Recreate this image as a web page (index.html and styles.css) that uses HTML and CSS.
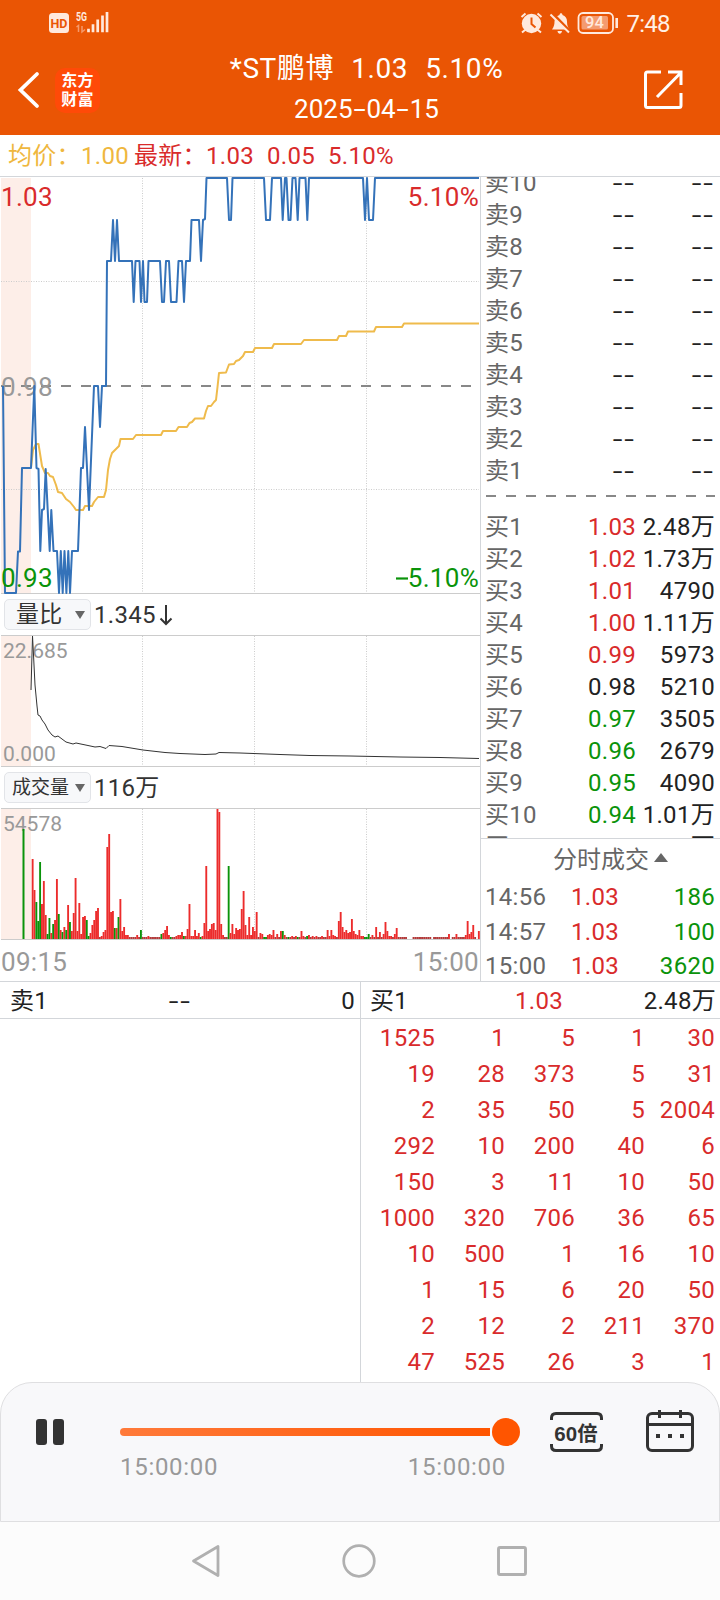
FILE: index.html
```html
<!DOCTYPE html>
<html lang="zh-CN">
<head>
	<title>*ST鹏博 2025-04-15</title>
	<meta charset="utf-8">
	<meta name="viewport" content="width=device-width, initial-scale=1">
	<link rel="stylesheet" href="styles.css">
</head>
<body>
	<header class="header">
		<div class="statusBar">
			<svg class="statusLeft" width="64" height="24" viewBox="48 10 64 24">
				<rect x="49" y="13" width="20" height="20" rx="3.5" fill="#ffe9dd"/>
				<text x="59" y="27.6" font-size="12.5" font-weight="700" text-anchor="middle" fill="#ea5504">HD</text>
				<text x="76" y="20.5" font-size="12" font-weight="700" textLength="11" lengthAdjust="spacingAndGlyphs" fill="#ffe9dd">5G</text>
				<path d="M76.5 27l2-1.5V32M82 26v6l3-2.5" fill="none" stroke="#f59a6c" stroke-width="1.5"/>
				<path d="M88.5 32.3v-3.6M93 32.3v-8M97.7 32.3V19.5M102.5 32.3V15.5M107 32.3V12" stroke="#ffe9dd" stroke-width="2.7"/>
			</svg>
			<svg class="statusRight" width="158" height="28" viewBox="518 9 158 28">
				<g fill="none" stroke="#ffe9dd">
					<circle cx="531.5" cy="23.5" r="9.7" fill="#ffe9dd" stroke="none"/>
					<path d="M521.5 17l4-3.5M541.5 17l-4-3.5M525 30l-3 2.5M538 30l3 2.5" stroke-width="2"/>
					<path d="M531.5 17.5v6.5l4 3.5" stroke="#ea5504" stroke-width="2"/>
					<path d="M552 29.5c2-3 2.5-5 2.5-8 0-3 2-5.5 5-6.5 0-2.5 3-2.5 3 0 3 1 4.5 3.5 4.5 6.5 0 4 1 6 2.5 8z" fill="#ffe9dd" stroke="none"/>
					<path d="M557.5 31h4.5c-.5 3.5-4 3.5-4.5 0z" fill="#ffe9dd" stroke="none"/>
					<path d="M552 13l19 19.5" stroke="#ea5504" stroke-width="3"/>
					<path d="M550.5 14.500l18.500 18" stroke-width="2"/>
					<rect x="578.5" y="13" width="34.5" height="20" rx="4.5" stroke-width="1.8"/>
					<path d="M616.7 18v10" stroke-width="2.6"/>
				</g>
				<rect x="581.5" y="16" width="26.5" height="13.5" rx="1.5" fill="#f49b70"/>
				<text x="594.5" y="28.4" font-size="16.5" font-weight="500" text-anchor="middle" fill="#ffe9dd">94</text>
				<text x="626.5" y="32" font-size="24" textLength="44" fill="#fff0e6">7:48</text>
			</svg>
		</div>
		<div class="titleBar">
			<svg class="back" width="24" height="40" viewBox="16 70 24 40">
				<path d="M37 74L20.5 90 37 106" fill="none" stroke="#fff" stroke-width="3.8" stroke-linecap="round"/>
			</svg>
			<div class="logo">东方<br>财富</div>
			<div class="title">
				<div class="name"><span>*ST鹏博</span><span>1.03</span><span>5.10%</span></div>
				<div class="date">2025<i class="dash">-</i>04<i class="dash">-</i>15</div>
			</div>
			<svg class="share" width="42" height="42" viewBox="643 69 42 42">
				<path d="M661 72h-13.5q-2 0-2 2v31.5q0 2 2 2h31.5q2 0 2-2V93M668 72h13v13M681 72.5L657 97" fill="none" stroke="#fff" stroke-width="3"/>
			</svg>
		</div>
	</header>

	<div class="quote">
		<span class="avg avgLabel">均价：</span>
		<span class="avg avgValue">1.00</span>
		<span class="up lastLabel">最新：</span>
		<span class="up">1.03</span>
		<span class="up">0.05</span>
		<span class="up">5.10%</span>
	</div>

	<main class="market">
		<section class="charts">
			<svg class="chart" width="480" height="417" viewBox="0 177 480 417">
				<rect class="preopen" x="1" y="178" width="30" height="416"/>
				<path class="grid" d="M142.5 178v415M254.5 178v415M366.5 178v415M1 281.5h478M1 489.5h478"/>
				<path class="frame" d="M1 593.5h479"/>
				<path d="M1 386h478" stroke="#888" stroke-width="2" stroke-dasharray="10 10"/>
				<text x="1" y="396" font-size="26" fill="#999">0.98</text>
				<polyline class="avgLine" points="31,468 33,450 36,444 38.5,444 42,466 45,473 48,473 50,476 53,477 56,485 58,492 62,493 66,499 70,502 74,507 76,510 83,510 85,506 92,506 94,502 98,497 104,497 106,490 108,470 110,459 112,453 116,449 119,446 120.5,439 133,439 136,435 161,435 163,431 176,431 178.5,427 187,427 189.5,423 192,422 195,418.5 204,418.5 206,411 208,406 211,406 214,402 216,400 217.5,387 219,373 226,372.5 229,364.5 234,364 236,361 239,360 243,356 245,352 253,352 255,348 272,348 274,344 301,344 304,340 337,340 339,336 346,336 348,331.5 374,331.5 376,327 402,327 404,323.5 479,323.5"/>
				<polyline class="priceLine" points="3,386 5,593 16,593 18,551.5 20,551.5 22,468 31,468 34.3,386 36.5,468 38.5,469 40.3,551 42,510 44,509 45.7,469 49.7,551 51.3,510 53.5,551 57,551 59,593 60.8,551 62.7,593 64.5,551 66.4,593 68.3,551 70,593 72,551 78,551 81,468 83,468 85,427 89,510 94,386 98,386 100,427 102,386 106,386 107,261 111,261 113,220 115,261 117,220 119,261 132,261 133.7,302 135.5,261 139.5,261 141,302 143,261 144.5,302 147,302 148.5,261 160,261 162,302 164,302 166,261 169,261 171,302 176.5,302 178.5,261 182,261 184,302 186,261 190,261 191.5,220 199,220 201,261 203,220 205,219 206.5,178 227,178 229,220 231,220 232.5,178 264,178 266,220 270,220 272,178 281,178 282.7,220 285,178 286.5,178 288.5,220 290.5,220 292.5,178 295.5,178 297.7,220 299.5,178 305.5,178 307.3,220 309,178 363,178 365,220 367,178 369,220 373,220 375,178 479,178"/>
				<text x="1" y="206" font-size="26" fill="#d92b2b">1.03</text>
				<text x="479" y="206" font-size="26" text-anchor="end" fill="#d92b2b">5.10%</text>
				<text x="1" y="587" font-size="26" fill="#0a930a">0.93</text>
				<path d="M396 578.5h12" stroke="#0a930a" stroke-width="2.2"/>
				<text x="479" y="587" font-size="26" text-anchor="end" fill="#0a930a">5.10%</text>
			</svg>

			<div class="indicator">
				<div class="picker">量比<i class="caret"></i></div>
				<span>1.345</span>
				<svg width="14" height="22" viewBox="0 0 14 22"><path d="M7 1v19M1.5 14.5L7 20l5.5-5.5" fill="none" stroke="#333" stroke-width="2"/></svg>
			</div>

			<svg class="chart" width="480" height="132" viewBox="0 635 480 132">
				<rect class="preopen" x="1" y="636" width="30" height="130"/>
				<path class="grid" d="M142.5 636v130M254.5 636v130M366.5 636v130"/>
				<path class="frame" d="M1 635.5h479M1 766.5h479"/>
				<text class="scale" x="3" y="658">22.685</text>
				<text class="scale" x="3" y="761">0.000</text>
				<polyline class="ratioLine" points="31,690 32.5,636 33.5,655 35,685 37,706 38,715 40,716 42,720 45,724 48,730 52,735 55,737 58,736 62,739 66,742 73,744 76,743 88,745.5 95,747 100,746.5 106,748.5 109,745.5 122,746.5 143,750 165,752.5 180,753.5 205,754.5 216,754 219,752.5 240,753 280,754.5 310,755.5 350,756 400,757 440,757.5 479,758.5"/>
			</svg>

			<div class="indicator">
				<div class="picker wide">成交量<i class="caret"></i></div>
				<span>116万</span>
			</div>

			<svg class="chart" width="480" height="132" viewBox="0 808 480 132">
				<rect class="preopen" x="1" y="809" width="30" height="130"/>
				<path class="grid" d="M142.5 809v130M254.5 809v130M366.5 809v130"/>
				<path class="frame" d="M1 808.5h479M1 939.5h479"/>
				<text class="scale" x="3" y="831">54578</text>
				<g id="volume"></g>
			</svg>

			<div class="timeAxis"><span>09:15</span><span>15:00</span></div>
		</section>

		<section class="side">
			<div class="book">
				<div id="asks"></div>
				<div class="spread"><svg width="229" height="2"><path d="M0 1h229" stroke="#888" stroke-width="2" stroke-dasharray="10 10"/></svg></div>
				<div id="bids"></div>
			</div>
			<div class="trades">
				<div class="tradesTitle">分时成交<i class="caretUp"></i></div>
				<div class="trade"><span>14:56</span><span class="up">1.03</span><span class="down">186</span></div>
				<div class="trade"><span>14:57</span><span class="up">1.03</span><span class="down">100</span></div>
				<div class="trade"><span>15:00</span><span class="up">1.03</span><span class="down">3620</span></div>
			</div>
		</section>
	</main>

	<section class="queues">
		<div class="queue">
			<div class="queueHead"><span>卖1</span><span><i class="dash">--</i></span><span>0</span></div>
		</div>
		<div class="queue">
			<div class="queueHead buy"><span>买1</span><span class="up">1.03</span><span>2.48万</span></div>
			<div class="orders" id="orders"></div>
		</div>
	</section>

	<footer class="player">
		<div class="pause"><i></i><i></i></div>
		<div class="progress">
			<div class="track"><i class="thumb"></i></div>
			<div class="times"><span>15:00:00</span><span>15:00:00</span></div>
		</div>
		<svg class="speed" width="54" height="42" viewBox="549 1411 54 42">
			<path d="M551.5 1420v-2q0-4.5 4.5-4.5h41q4.5 0 4.5 4.5v2M551.5 1444v2q0 4.5 4.5 4.5h41q4.5 0 4.5-4.5v-2" fill="none" stroke="#333" stroke-width="3"/>
			<text x="576" y="1440.5" font-size="20.5" text-anchor="middle">60倍</text>
		</svg>
		<svg class="calendar" width="50" height="44" viewBox="645 1409 50 44">
			<rect x="647.5" y="1413.5" width="45" height="37" rx="4.5" fill="none" stroke="#333" stroke-width="3"/>
			<path d="M648 1424.5h44M659.5 1410v8M680.5 1410v8" stroke="#333" stroke-width="3"/>
			<path d="M656 1436h4M668 1436h4M680 1436h4" stroke="#333" stroke-width="4"/>
		</svg>
	</footer>

	<nav class="navBar">
		<svg width="30" height="34" viewBox="0 0 30 34"><path d="M27 2.5V31.5L2.5 17z" fill="none" stroke="#b0b0b0" stroke-width="2.8" stroke-linejoin="round"/></svg>
		<svg width="34" height="34" viewBox="0 0 34 34"><circle cx="17" cy="17" r="15.3" fill="none" stroke="#b0b0b0" stroke-width="2.7"/></svg>
		<svg width="30" height="30" viewBox="0 0 30 30"><rect x="1.5" y="1.5" width="27" height="27" rx="1.5" fill="none" stroke="#b0b0b0" stroke-width="2.9"/></svg>
	</nav>

	<script>
		// one bar per minute from 09:30, g = falling minute, 0 = no trades
		const volume = (
			'80 49 37g 18g 77g 35 58 24 5g 21g 6 15g 19 60 25g 9 7g 12 9g 34 17g 8 26 61 8 36 5 22 23 19g ' +
			'3g 6 14 19 28 31 2 3 7 9 92 105 27 28 11g 11 22g 40 8 12 4 4 2 2 2 2 4 2 9g 2 ' +
			'2 2 3 2 2 2 2 2 2 5g 6 9 13 4 2g 2 2 3 4 4 7 3g 3 10 35 3 3 9 3 6 ' +
			'2g 3 16 73 8 10 15 16 9 130 127 15 4 2 2 73g 6 15 5 11 9 10 30 48 14 4 22 4 12 8 ' +
			'27 2 6 5 2g 2g 4 5 4 9 2 5 2 8 8g 4 2 2g 2 3 2 3 2g 2 8 3 2 3g 4 2 ' +
			'3 2 3 2 2 3 2 2 9 3 9 4 3 2 18 27 12 7 9 6 7 20 8 5 4 9 3 3 2g 2g ' +
			'5g 2 4 2 12 2 7 2 5 17 8 3 3 2 5 11 2 2 2 2 2 0 0 0 2 2 2 2 2 2 ' +
			'2 2 2 2 0 2 2 2 2 2 2 2 2 5 0 2 2 5 2 2 2 2 4 18 5 7 14 2 0 8'
		).split(' ');
		let bars = '<rect x="22.5" y="829" width="2" height="110" fill="#0a930a"/>';
		volume.forEach((v, i) => {
			const h = parseInt(v);
			const color = v.endsWith('g') ? '#0a930a' : (h < 3 ? '#b23a3a' : '#ec2c2c');
			bars += `<rect x="${(31.7 + i * 1.867).toFixed(2)}" y="${939 - h}" width="1.87" height="${h}" fill="${color}"/>`;
		});
		document.getElementById('volume').innerHTML = bars;

		const dash = '<i class="dash">--</i>';
		const row = (name, price, amount, cls) =>
			`<div class="level"><span>${name}</span><span class="${cls}">${price}</span><span>${amount}</span></div>`;

		let asks = '';
		for (let i = 10; i > 0; i--) {
			asks += row('卖' + i, dash, dash, '');
		}
		document.getElementById('asks').innerHTML = asks;

		const amounts = ['2.48万', '1.73万', '4790', '1.11万', '5973', '5210', '3505', '2679', '4090', '1.01万', '1.11万'];
		document.getElementById('bids').innerHTML = amounts.map((amount, i) => {
			const price = (1.03 - i * 0.01).toFixed(2);
			return row('买' + (i + 1), price, amount, i < 5 ? 'up' : (i > 5 ? 'down' : ''));
		}).join('');

		const orders = [
			1525, 1, 5, 1, 30,
			19, 28, 373, 5, 31,
			2, 35, 50, 5, 2004,
			292, 10, 200, 40, 6,
			150, 3, 11, 10, 50,
			1000, 320, 706, 36, 65,
			10, 500, 1, 16, 10,
			1, 15, 6, 20, 50,
			2, 12, 2, 211, 370,
			47, 525, 26, 3, 1
		];
		document.getElementById('orders').innerHTML = orders.map(n => `<span>${n}</span>`).join('');
	</script>
</body>
</html>
```
FILE: styles.css
```css
* {
	box-sizing: border-box;
}

body {
	margin: 0;
	width: 720px;
	height: 1600px;
	overflow: hidden;
	display: flex;
	flex-direction: column;
	font-family: Roboto, "Noto Sans CJK SC", sans-serif;
	font-size: 24px;
	line-height: 32px;
	letter-spacing: .3px;
	white-space: nowrap;
	color: #222;
	background: #fff;
}

i {
	font-style: normal;
}

svg {
	display: block;
	flex: none;
}

.up {
	color: #d92b2b;
}

.down {
	color: #0a930a;
}

/* wide hyphen */
.dash {
	display: inline-block;
	letter-spacing: 1.3px;
	transform: scaleX(1.45);
	transform-origin: right;
}

/* header */

.header {
	height: 135px;
	background: #ea5504;
	color: #fff;
}

.statusBar {
	height: 46px;
	padding: 9px 44px 0 48px;
	display: flex;
	justify-content: space-between;
	letter-spacing: 0;
}

.statusLeft {
	margin-top: 1px;
}

.titleBar {
	height: 89px;
	padding-left: 16px;
	display: flex;
}

.back {
	margin-top: 24px;
}

.logo {
	width: 45px;
	height: 45px;
	margin: 22px 0 0 15px;
	padding-top: 2px;
	border-radius: 10px;
	background: #ff4a08;
	font-family: "Noto Sans CJK SC", sans-serif;
	font-size: 16px;
	font-weight: 700;
	line-height: 19px;
	text-align: center;
}

.title {
	width: 533px;
	margin-right: 10px;
	text-align: center;
}

.name {
	margin-top: 3px;
	display: flex;
	justify-content: center;
	gap: 17px;
	font-size: 28px;
	line-height: 40px;
	letter-spacing: .6px;
}

.date {
	font-size: 26px;
	line-height: 40px;
	letter-spacing: 0;
}

.date .dash {
	margin: 0 3.4px;
	letter-spacing: 0;
	transform: scaleX(1.7);
	transform-origin: center;
}

.share {
	margin-top: 23px;
}

/* quote line */

.quote {
	height: 42px;
	padding-left: 8px;
	display: flex;
	gap: 13px;
	line-height: 43px;
	border-bottom: 1px solid #d3d6da;
}

.avg {
	color: #efb73e;
}

.avgLabel {
	width: 60px;
}

.avgValue {
	margin-right: -8px;
}

.lastLabel {
	width: 59px;
}

/* charts */

.market {
	height: 805px;
	display: flex;
	border-bottom: 1px solid #d3d6da;
}

.charts {
	width: 481px;
	border-right: 1px solid #d3d6da;
}

.preopen {
	fill: #fdeee8;
}

.grid {
	stroke: #ccc;
	stroke-dasharray: 1 1.5;
}

.frame {
	stroke: #ccc;
}

.priceLine, .avgLine, .ratioLine {
	fill: none;
	stroke-width: 2;
	stroke-linejoin: round;
}

.priceLine {
	stroke: #3472b9;
}

.avgLine {
	stroke: #efbb4c;
}

.ratioLine {
	stroke: #333;
	stroke-width: 1;
}

.scale {
	font-size: 21px;
	letter-spacing: 0;
	fill: #999;
}

.indicator {
	height: 41px;
	padding-left: 4px;
	display: flex;
	align-items: center;
	gap: 3px;
	color: #333;
}

.picker {
	width: 87px;
	height: 31px;
	padding: 0 5px 0 11px;
	display: flex;
	align-items: center;
	justify-content: space-between;
	border: 1px solid #e2e4e8;
	border-radius: 5px;
	background: #f7f8fa;
	font-size: 23px;
}

.picker.wide {
	padding-left: 7px;
	font-size: 19px;
	letter-spacing: 0;
}

.caret {
	border: 5px solid transparent;
	border-top: 8px solid #666;
	border-bottom: 0;
}

.timeAxis {
	padding: 0 1px 0 1px;
	display: flex;
	justify-content: space-between;
	font-size: 26px;
	line-height: 44px;
	color: #999;
}

/* order book */

.side {
	width: 239px;
}

.book {
	height: 662px;
	padding: 0 5px 0 4px;
	overflow: hidden;
	border-bottom: 1px solid #d3d6da;
}

#asks {
	margin-top: -10px;
}

.level {
	height: 32px;
	display: grid;
	grid-template-columns: 60px 91px 79px;
}

.level span {
	text-align: right;
}

.level span:first-child, .trade span:first-child {
	text-align: left;
	color: #666;
}

.spread {
	height: 24px;
	padding: 8px 0 0 1px;
}

.tradesTitle {
	height: 40px;
	padding: 5px 0 0 72px;
	display: flex;
	gap: 5px;
	letter-spacing: 0;
	color: #666;
}

.caretUp {
	height: 9px;
	margin-top: 9px;
	border: 7px solid transparent;
	border-bottom: 9px solid #666;
	border-top: 0;
}

.trade {
	height: 34.5px;
	padding: 0 5px 0 4px;
	display: grid;
	grid-template-columns: 86px 60px 84px;
	line-height: 36px;
}

.trade span:last-child {
	text-align: right;
}

/* order queues */

.queues {
	height: 400px;
	display: grid;
	grid-template-columns: 361px 359px;
}

.queue:first-child {
	border-right: 1px solid #d3d6da;
}

.queueHead {
	height: 37px;
	padding: 0 5px 0 10px;
	display: grid;
	grid-template-columns: 60px 122px 1fr;
	line-height: 38px;
	text-align: right;
	border-bottom: 1px solid #d3d6da;
}

.queueHead.buy {
	grid-template-columns: 60px 133px 1fr;
	padding: 0 4px 0 9px;
}

.queueHead span:first-child {
	text-align: left;
}

.orders {
	padding-top: 1px;
	display: grid;
	grid-template-columns: 74px repeat(4, 70px);
	line-height: 36px;
	text-align: right;
	color: #d92b2b;
}

/* replay controls */

.player {
	height: 140px;
	padding: 28px 24px 0 35px;
	display: flex;
	align-items: flex-start;
	border: 1px solid #dfdfe1;
	border-radius: 32px 32px 0 0;
	background: #f8f8fa;
}

.pause {
	margin-top: 8px;
	display: flex;
	gap: 6px;
}

.pause i {
	width: 11px;
	height: 26px;
	border-radius: 3px;
	background: #333;
}

.progress {
	width: 400px;
	margin: 17px 0 0 56px;
}

.track {
	position: relative;
	width: 370px;
	height: 8px;
	border-radius: 4px 0 0 4px;
	background: linear-gradient(to right, #ff7a3a, #ff5500);
}

.thumb {
	position: absolute;
	left: 372px;
	top: -10px;
	width: 28px;
	height: 28px;
	border-radius: 50%;
	background: #ff5500;
}

.times {
	width: 386px;
	margin-top: 15px;
	display: flex;
	justify-content: space-between;
	letter-spacing: .7px;
	color: #999;
}

.speed {
	margin: 0 0 0 29px;
	font-family: "Liberation Sans", "Noto Sans CJK SC", sans-serif;
	font-weight: 700;
	letter-spacing: 0;
	fill: #333;
}

.calendar {
	margin: -2px 0 0 42px;
}

.navBar {
	height: 78px;
	display: flex;
	justify-content: center;
	align-items: center;
	gap: 121px;
	padding-right: 2px;
	background: #fcfcfc;
}
```
